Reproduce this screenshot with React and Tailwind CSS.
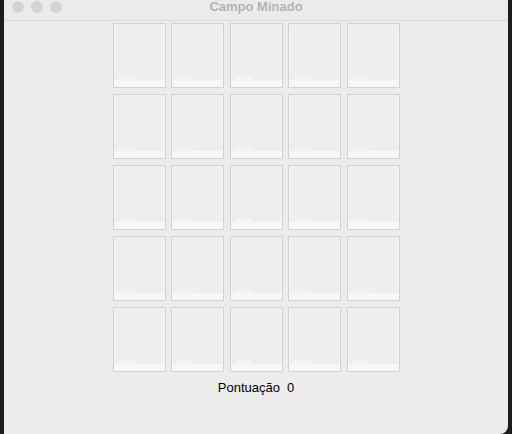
export default function App() {
  const tiles = Array.from({ length: 25 }, (_, i) => i);
  return (
    <div className="flex h-[434px] w-[512px] overflow-hidden bg-[#1c1c1c] font-['Liberation_Sans',Arial,sans-serif]">
      <div className="ml-[4px] flex h-full w-[504px] flex-col rounded-br-[8px] bg-[#ececec]">
        {/* title bar */}
        <div className="relative flex h-[21px] items-center justify-center border-b border-[#dadada] bg-[#ebebeb]">
          <div className="absolute left-[8px] top-[1px] flex gap-[7px]">
            <span className="h-[12px] w-[12px] rounded-full bg-[#d3d3d3]" />
            <span className="h-[12px] w-[12px] rounded-full bg-[#d3d3d3]" />
            <span className="h-[12px] w-[12px] rounded-full bg-[#d3d3d3]" />
          </div>
          <span className="-mt-[6px] text-[13px] font-bold text-[#b3b3b3]">Campo Minado</span>
        </div>

        {/* board */}
        <div className="mt-[2px] flex justify-center">
          <div className="grid grid-cols-[repeat(5,53px)] grid-rows-[repeat(5,65px)] gap-x-[5.5px] gap-y-[6px]">
            {tiles.map((t) => (
              <button
                key={t}
                className="flex flex-col border border-[#d2d2d2] bg-[#eeeeee] shadow-[inset_0_0_0_1px_#f2f2f2]"
              >
                <div className="flex-1" />
                <div className="ml-[5px] h-[4px] w-[16px] bg-[#f3f3f3]" />
                <div className="h-[7px] w-full bg-[#f7f7f7]" />
              </button>
            ))}
          </div>
        </div>

        <div className="mt-[6px] flex justify-center text-[13px] text-black">
          <span>Pontuação</span>
          <span className="ml-[7px]">0</span>
        </div>
      </div>
    </div>
  );
}
